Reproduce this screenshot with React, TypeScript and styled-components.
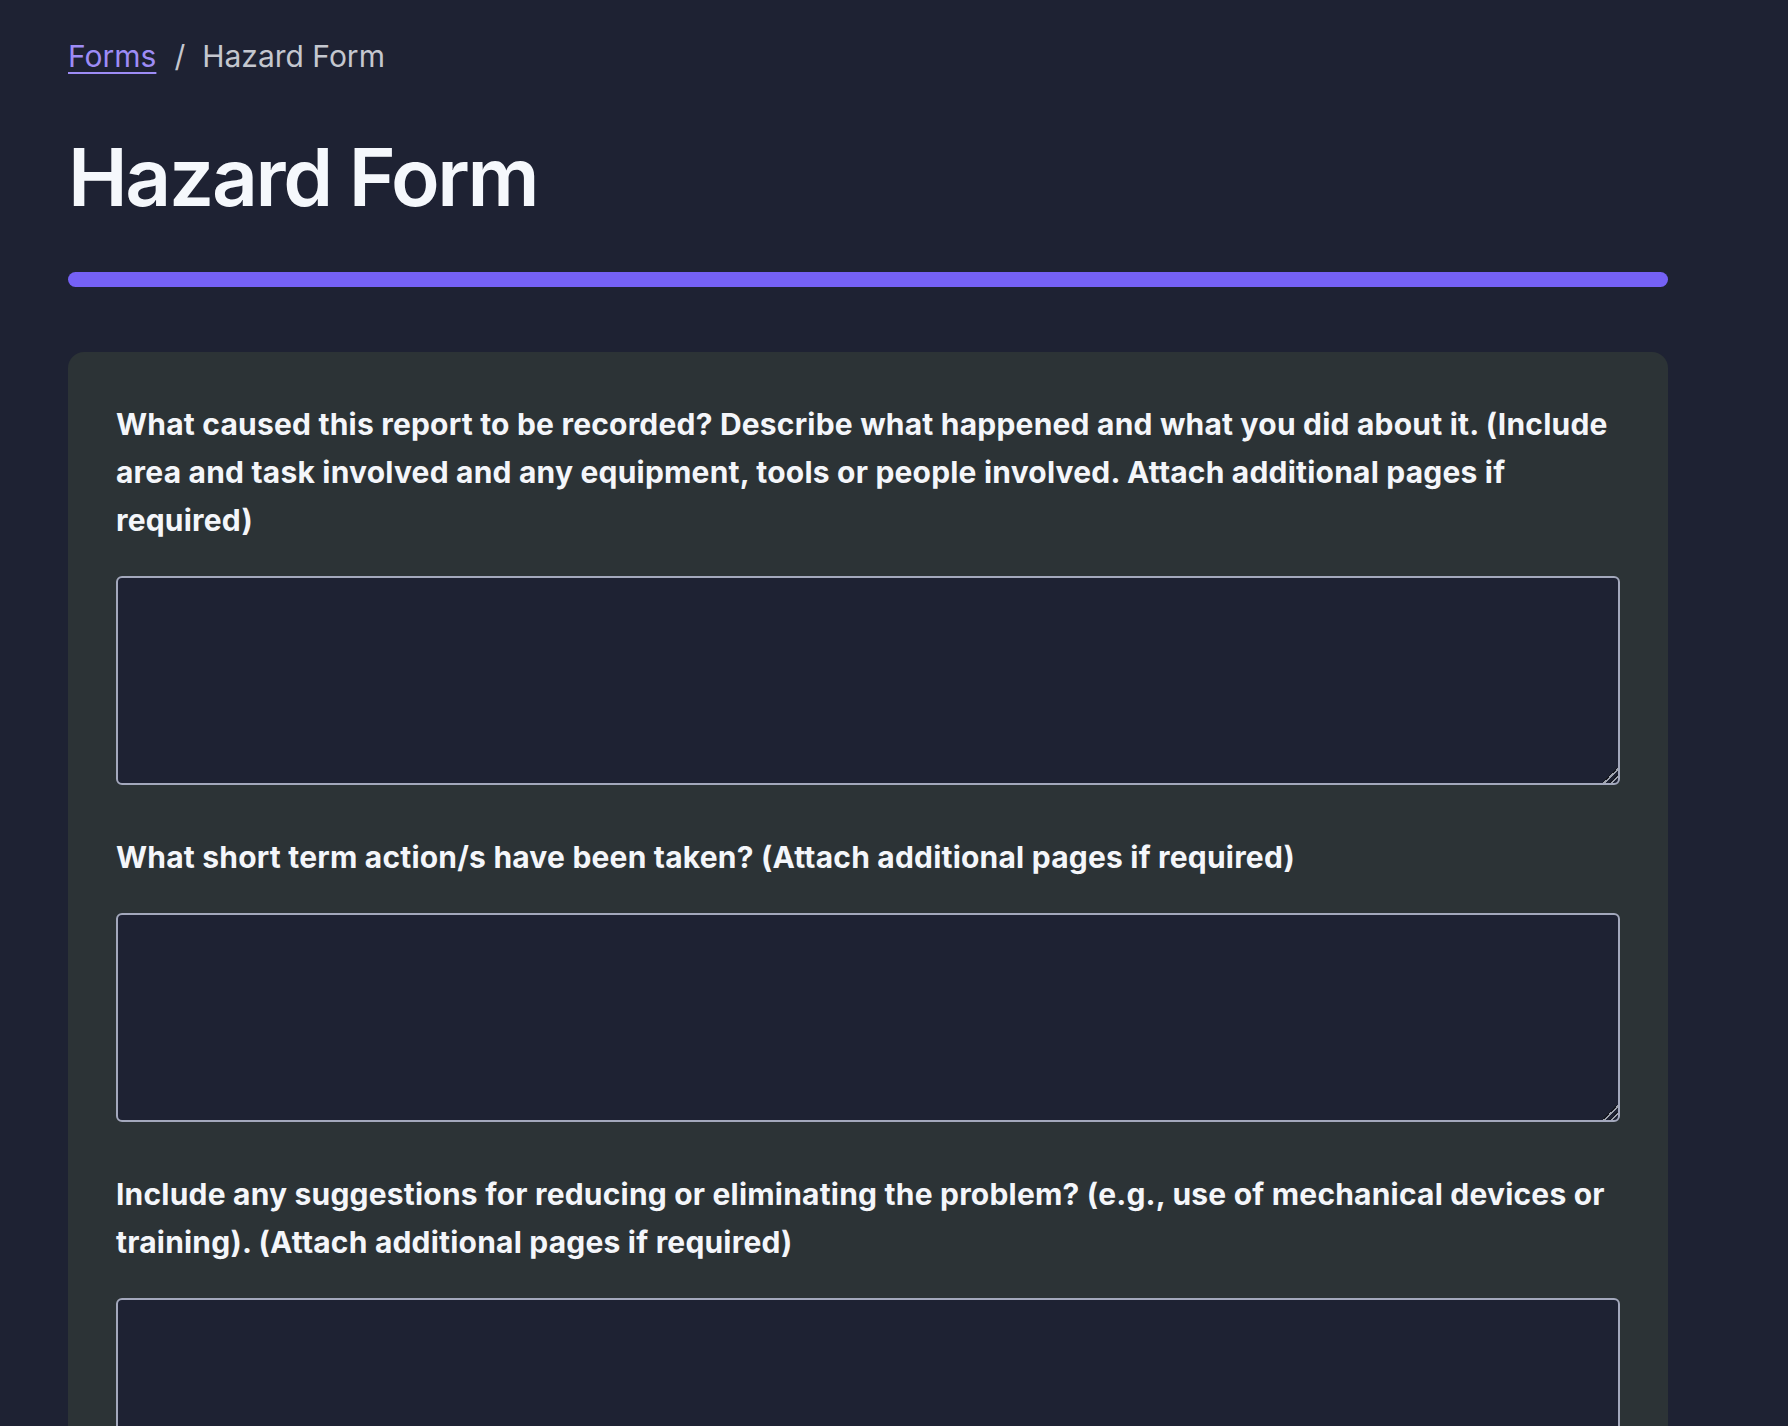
import React from "react";
import styled, { createGlobalStyle } from "styled-components";

const GlobalStyle = createGlobalStyle`
  * { box-sizing: border-box; }
  html, body {
    margin: 0;
    padding: 0;
    background: #1e2233;
  }
  body {
    font-family: Inter, "Noto Sans", sans-serif;
    color: #f5f7fb;
  }
`;

const Page = styled.main`
  padding: 34px 68px 80px;
`;

const Container = styled.div`
  max-width: 1600px;
`;

const Breadcrumb = styled.nav`
  display: flex;
  align-items: center;
  font-size: 30px;
  line-height: 45px;
  font-weight: 400;
`;

const CrumbLink = styled.a`
  color: #9d8cf6;
  text-decoration: underline;
  text-decoration-thickness: 2px;
  text-underline-offset: 5px;
  cursor: pointer;
`;

const Separator = styled.span`
  color: #c4c7cf;
  padding: 0 17px 0 18px;
`;

const CrumbCurrent = styled.span`
  color: #c4c7cf;
`;

const Title = styled.h1`
  margin: 50px 0 0;
  font-size: 80px;
  line-height: 96px;
  font-weight: 600;
  letter-spacing: -2.3px;
  color: #f5f8fc;
`;

const AccentBar = styled.div`
  margin-top: 47px;
  height: 15px;
  border-radius: 8px;
  background: #7561f5;
`;

const Card = styled.section`
  margin-top: 65px;
  background: #2c3336;
  border-radius: 16px;
  padding: 48px;
  display: flex;
  flex-direction: column;
  gap: 48px;
`;

const Field = styled.div`
  display: flex;
  flex-direction: column;
  gap: 32px;
`;

const Label = styled.label`
  font-size: 30px;
  line-height: 48px;
  font-weight: 700;
  letter-spacing: 0.2px;
  color: #f4f6fa;
`;

const TextArea = styled.textarea`
  display: block;
  width: 100%;
  height: 209px;
  background: #1e2233;
  border: 2px solid #a3a8bc;
  border-radius: 6px;
  color: #f4f6fa;
  color-scheme: dark;
  font-family: Inter, sans-serif;
  font-size: 24px;
  padding: 12px 16px;
  outline: none;
  resize: vertical;

  &::-webkit-resizer {
    background: linear-gradient(
      135deg,
      transparent 0 46%,
      #15171f 46% 50%,
      #9fa3ad 50% 58%,
      transparent 58% 70%,
      #15171f 70% 74%,
      #9fa3ad 74% 82%,
      transparent 82%
    );
  }
`;

const questions = [
  "What caused this report to be recorded? Describe what happened and what you did about it. (Include area and task involved and any equipment, tools or people involved. Attach additional pages if required)",
  "What short term action/s have been taken? (Attach additional pages if required)",
  "Include any suggestions for reducing or eliminating the problem? (e.g., use of mechanical devices or training). (Attach additional pages if required)",
];

export default function App() {
  return (
    <>
      <GlobalStyle />
      <Page>
        <Container>
          <Breadcrumb>
            <CrumbLink href="#">Forms</CrumbLink>
            <Separator>/</Separator>
            <CrumbCurrent>Hazard Form</CrumbCurrent>
          </Breadcrumb>
          <Title>Hazard Form</Title>
          <AccentBar />
          <Card>
            {questions.map((q, i) => (
              <Field key={i}>
                <Label htmlFor={`q${i}`}>{q}</Label>
                <TextArea id={`q${i}`} />
              </Field>
            ))}
          </Card>
        </Container>
      </Page>
    </>
  );
}
